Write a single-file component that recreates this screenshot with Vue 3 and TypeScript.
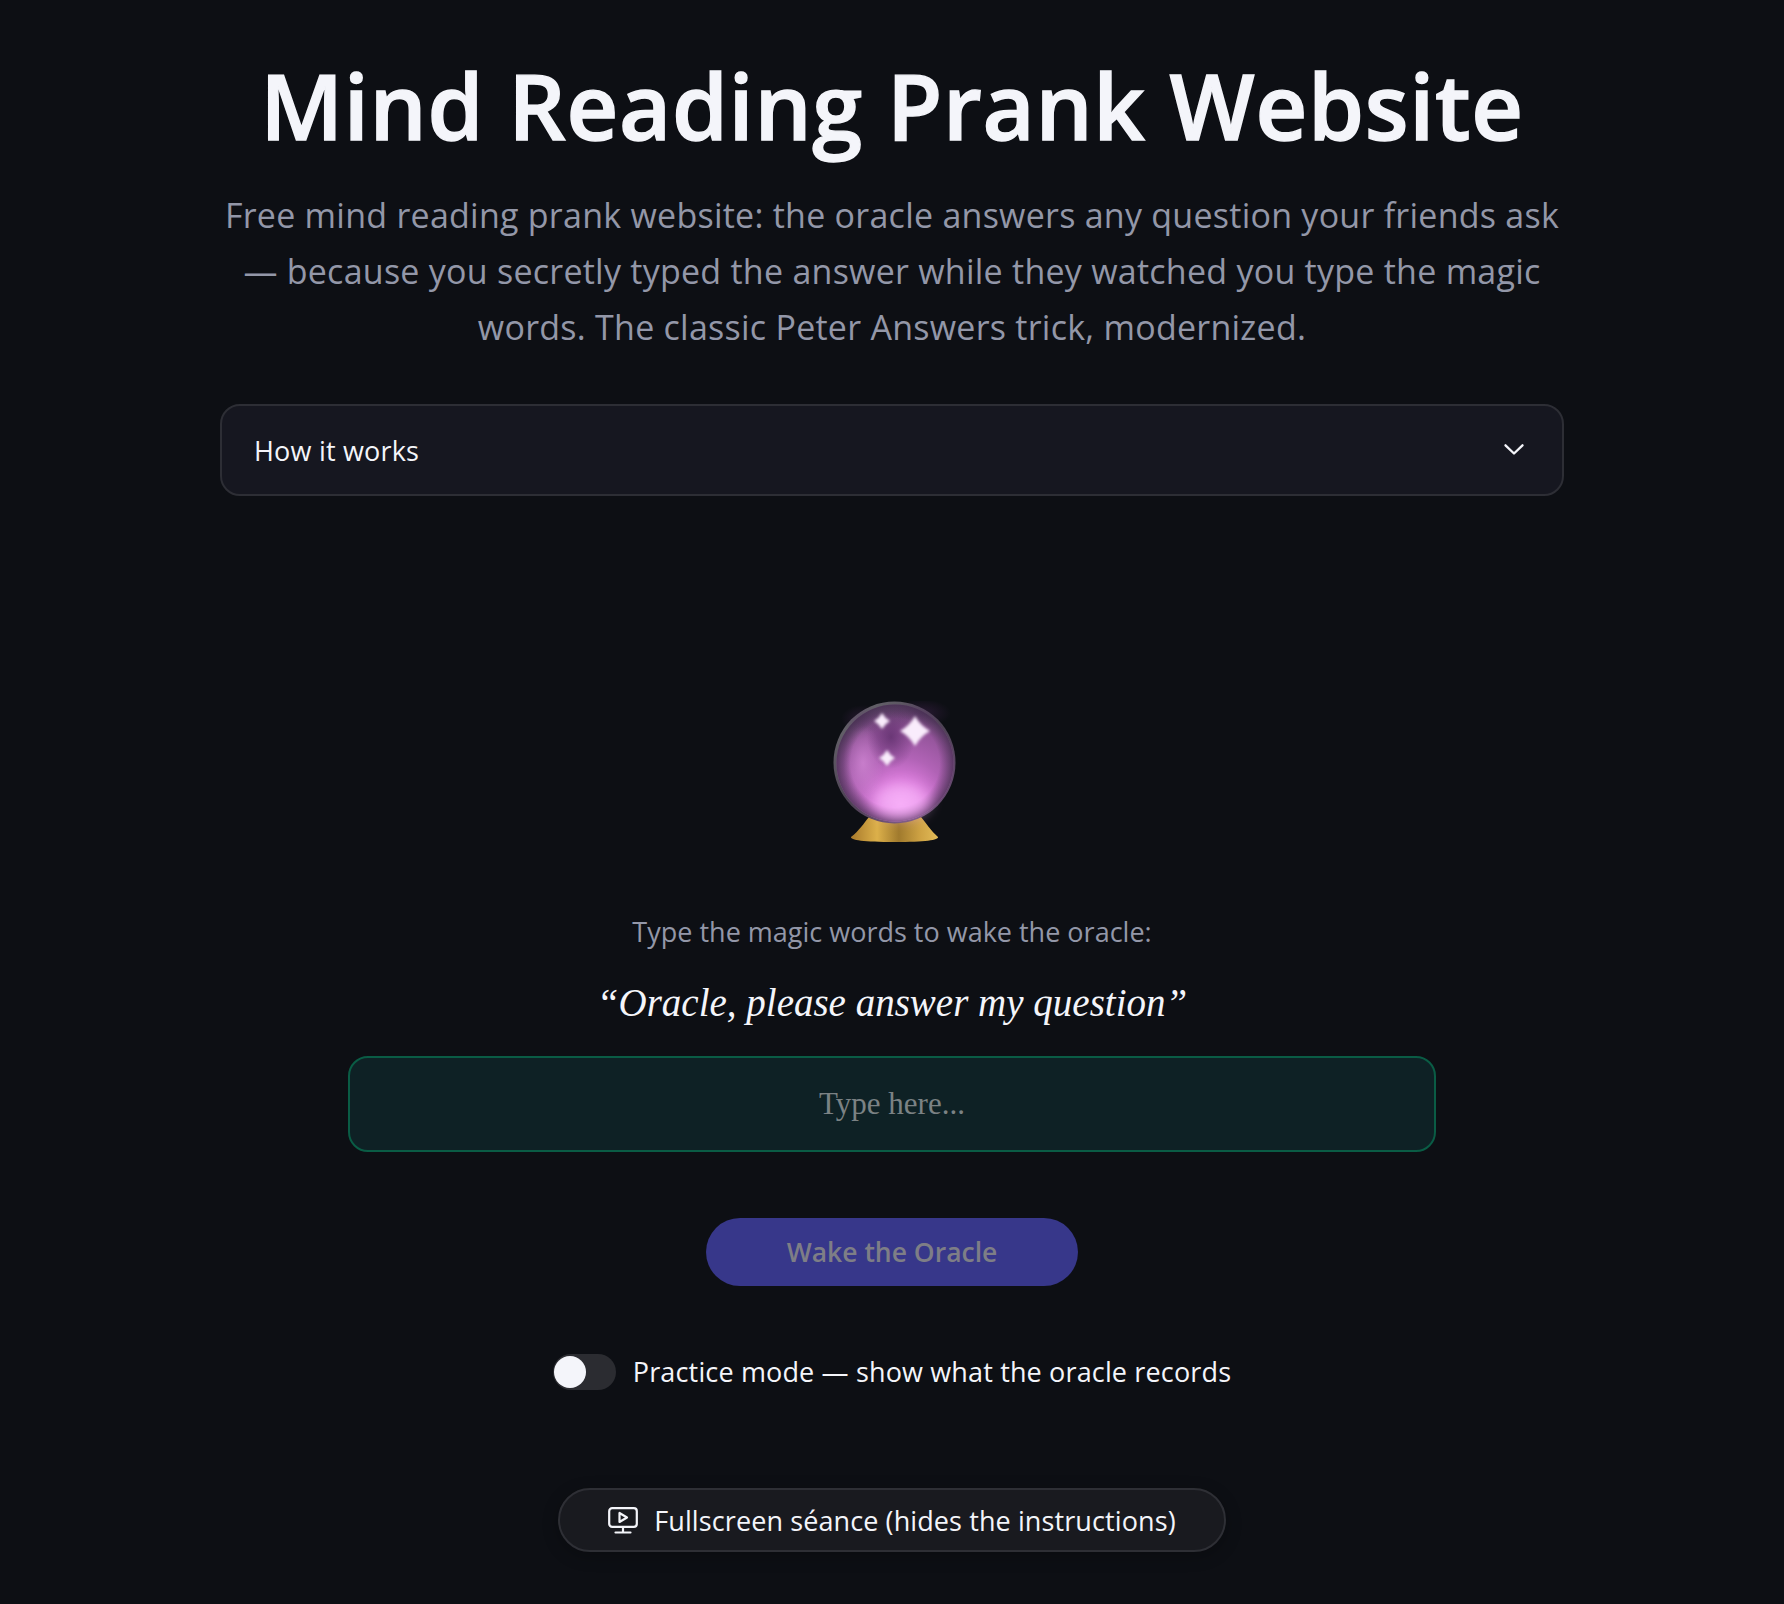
<script setup lang="ts">
const sparkles: { x: number; y: number; r: number }[] = [
  { x: 49, y: 20, r: 8 },
  { x: 82, y: 30, r: 15 },
  { x: 54, y: 57, r: 8 },
]
function star(x: number, y: number, r: number): string {
  const k = r * 0.36
  return `M${x} ${y - r}Q${x + k} ${y - k} ${x + r} ${y}Q${x + k} ${y + k} ${x} ${y + r}Q${x - k} ${y + k} ${x - r} ${y}Q${x - k} ${y - k} ${x} ${y - r}Z`
}
</script>

<template>
  <main class="page">
    <header class="hero">
      <h1 class="title">Mind Reading Prank Website</h1>
      <p class="lede">
        Free mind reading prank website: the oracle answers any question your friends ask<br />
        — because you secretly typed the answer while they watched you type the magic<br />
        words. The classic Peter Answers trick, modernized.
      </p>
    </header>

    <button class="accordion" type="button">
      <span>How it works</span>
      <svg class="chevron" viewBox="0 0 20 11" fill="none">
        <path d="M1.500 1.300 10 9.500l8.500-8.200" stroke="#f4f5fa" stroke-width="2.300" stroke-linecap="round" stroke-linejoin="round" />
      </svg>
    </button>

    <section class="oracle">
      <svg class="ball" viewBox="0 0 123 141" aria-label="crystal ball">
        <defs>
          <radialGradient id="orb" cx="0.55" cy="0.85" r="0.8">
            <stop offset="0" stop-color="#f3a2f3" />
            <stop offset="0.25" stop-color="#d97ada" />
            <stop offset="0.5" stop-color="#b163b6" />
            <stop offset="0.8" stop-color="#93549a" />
            <stop offset="1" stop-color="#6d4b76" />
          </radialGradient>
          <radialGradient id="swirl" cx="0.5" cy="0.5" r="0.5">
            <stop offset="0" stop-color="#5a2c68" stop-opacity="0.75" />
            <stop offset="1" stop-color="#5a2c68" stop-opacity="0" />
          </radialGradient>
          <radialGradient id="side" cx="0.5" cy="0.5" r="0.5">
            <stop offset="0" stop-color="#d58ad8" stop-opacity="0.7" />
            <stop offset="1" stop-color="#d58ad8" stop-opacity="0" />
          </radialGradient>
          <radialGradient id="edge" cx="0.5" cy="0.5" r="0.5">
            <stop offset="0.76" stop-color="#3d2b48" stop-opacity="0" />
            <stop offset="1" stop-color="#3d2b48" stop-opacity="0.7" />
          </radialGradient>
          <linearGradient id="rim" x1="0.1" y1="0" x2="0.9" y2="1">
            <stop offset="0" stop-color="#69696e" />
            <stop offset="0.5" stop-color="#4d4254" />
            <stop offset="1" stop-color="#6e4a78" />
          </linearGradient>
          <linearGradient id="gold" x1="0" y1="0" x2="1" y2="0">
            <stop offset="0" stop-color="#a87a2c" />
            <stop offset="0.3" stop-color="#dcb04a" />
            <stop offset="0.55" stop-color="#a07a2d" />
            <stop offset="0.8" stop-color="#cfa344" />
            <stop offset="1" stop-color="#e2bb58" />
          </linearGradient>
          <filter id="soft" x="-50%" y="-50%" width="200%" height="200%">
            <feGaussianBlur stdDeviation="1.500" />
          </filter>
          <filter id="glow" x="-60%" y="-60%" width="220%" height="220%">
            <feGaussianBlur stdDeviation="7" />
          </filter>
        </defs>
        <path d="M18 136C26 130 31 122 36 116H88C93 122 98 130 105 136C106 139 92 141 61.500 141C31 141 17 139 18 136Z" fill="url(#gold)" />
        <circle cx="61.500" cy="61.500" r="61" fill="url(#rim)" />
        <circle cx="62" cy="62" r="58.500" fill="url(#orb)" />
        <ellipse cx="30" cy="62" rx="20" ry="38" fill="url(#side)" />
        <ellipse cx="58" cy="36" rx="24" ry="32" fill="url(#swirl)" />
        <ellipse cx="88" cy="12" rx="30" ry="14" fill="url(#swirl)" opacity="0.5" />
        <ellipse cx="30" cy="18" rx="22" ry="14" fill="url(#swirl)" opacity="0.45" />
        <circle cx="62" cy="62" r="58.500" fill="url(#edge)" />
        <ellipse cx="68" cy="100" rx="28" ry="17" fill="#f8b4f9" opacity="0.7" filter="url(#glow)" />
        <path v-for="(s, i) in sparkles" :key="i" :d="star(s.x, s.y, s.r)" fill="#f9ecfc" filter="url(#soft)" />
      </svg>

      <p class="prompt">Type the magic words to wake the oracle:</p>
      <p class="phrase">“Oracle, please answer my question”</p>
      <input class="magic" type="text" placeholder="Type here..." />
      <button class="wake" type="button" disabled>Wake the Oracle</button>

      <label class="practice">
        <span class="track"><span class="knob"></span></span>
        <span>Practice mode — show what the oracle records</span>
      </label>

      <button class="seance" type="button">
        <svg class="screen" viewBox="0 0 30 27" fill="none" stroke="#f4f5fa" stroke-width="2.200" stroke-linecap="round" stroke-linejoin="round">
          <rect x="1.200" y="1.200" width="27.600" height="18.600" rx="3" />
          <path d="M11.500 6v9l7.500-4.500z" />
          <path d="M15 20v5M7.500 25.500h15" />
        </svg>
        <span>Fullscreen séance (hides the instructions)</span>
      </button>
    </section>
  </main>
</template>

<style>
html,
body {
  margin: 0;
  background: #0d0f14;
}
</style>

<style scoped>
.page {
  box-sizing: border-box;
  width: 1344px;
  min-height: 1604px;
  margin: 0 auto;
  padding: 51px 0 52px;
  display: flex;
  flex-direction: column;
  font-family: "Open Sans", "Liberation Sans", sans-serif;
  color: #f4f5fa;
}
.hero {
  display: flex;
  flex-direction: column;
  align-items: center;
  text-align: center;
}
.title {
  margin: 0;
  font-size: 90px;
  line-height: 108px;
  font-weight: 600;
  letter-spacing: 0.7px;
  -webkit-text-stroke: 1.4px #f4f5fa;
  white-space: nowrap;
  color: #f4f5fa;
}
.lede {
  margin: 28px 0 0;
  font-size: 34px;
  line-height: 56px;
  letter-spacing: 0.25px;
  color: #9397a8;
  white-space: nowrap;
}
.accordion {
  box-sizing: border-box;
  margin-top: 49px;
  width: 100%;
  height: 92px;
  padding: 0 32px;
  display: flex;
  align-items: center;
  justify-content: space-between;
  background: #161720;
  border: 2px solid #2d2e35;
  border-radius: 20px;
  color: #f4f5fa;
  font: inherit;
  font-size: 27px;
  font-weight: 400;
  letter-spacing: 0.2px;
}
.chevron {
  width: 20px;
  height: 11px;
  margin-right: 6px;
  margin-bottom: 2px;
}
.oracle {
  display: flex;
  flex-direction: column;
  align-items: center;
  margin-top: 205px;
}
.ball {
  display: block;
  width: 123px;
  height: 141px;
  margin-left: 5px;
}
.prompt {
  margin: 70px 0 0;
  font-size: 27px;
  line-height: 40px;
  color: #9397a8;
}
.phrase {
  margin: 23px 0 0;
  font-family: "Liberation Serif", serif;
  font-style: italic;
  font-size: 39px;
  line-height: 56px;
  color: #f4f5fa;
}
.magic {
  box-sizing: border-box;
  margin-top: 25px;
  width: 1088px;
  height: 96px;
  background: #0e2125;
  border: 2px solid #0a5c45;
  border-radius: 20px;
  text-align: center;
  font-family: "Liberation Serif", serif;
  font-size: 31px;
  color: #f4f5fa;
  outline: none;
}
.magic::placeholder {
  color: #7b8284;
  opacity: 1;
}
.wake {
  margin-top: 66px;
  width: 372px;
  height: 68px;
  border: 0;
  border-radius: 34px;
  background: #37378a;
  color: #7e7e86;
  font: inherit;
  font-size: 26.500px;
  font-weight: 600;
}
.practice {
  margin-top: 68px;
  display: flex;
  align-items: center;
  gap: 17px;
  font-size: 27px;
  font-weight: 400;
  letter-spacing: 0.15px;
  line-height: 36px;
}
.track {
  position: relative;
  display: block;
  width: 63px;
  height: 36px;
  border-radius: 18px;
  background: #2b2c31;
}
.knob {
  position: absolute;
  top: 2px;
  left: 1px;
  width: 32px;
  height: 32px;
  border-radius: 50%;
  background: #f4f5fa;
}
.seance {
  box-sizing: border-box;
  margin-top: 98px;
  width: 668px;
  height: 64px;
  display: flex;
  align-items: center;
  justify-content: center;
  gap: 16px;
  background: #191a1f;
  border: 2px solid #2e2f35;
  border-radius: 32px;
  box-shadow: 0 4px 16px rgba(0, 0, 0, 0.25);
  color: #f4f5fa;
  font: inherit;
  font-size: 27px;
  font-weight: 500;
  letter-spacing: 0.1px;
}
.screen {
  width: 30px;
  height: 27px;
  flex: none;
}
</style>
